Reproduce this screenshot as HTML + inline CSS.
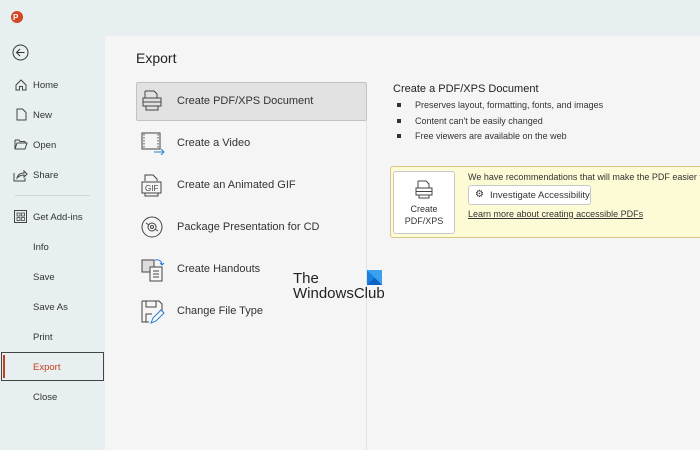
<!DOCTYPE html>
<html><head><style>
body{margin:0;width:700px;height:450px;overflow:hidden;background:#e7eff1;font-family:"Liberation Sans",sans-serif;position:relative}
.abs{position:absolute}
.nav{position:absolute;left:33px;font-size:9.5px;color:#333}
.main{position:absolute;left:105px;top:36px;width:595px;height:414px;background:#f5f5f5}
.item{position:absolute;left:136px;width:230px;height:38px;font-size:11px;color:#333}
.item span{position:absolute;left:41px;top:13px}
.item svg{position:absolute;left:4px;top:7px}
.bul{position:absolute;left:397px;font-size:9px;color:#333}
.bul:before{content:"";position:absolute;left:0;top:3px;width:4px;height:4px;background:#333}
.bul span{margin-left:18px}
</style></head><body>
<div class="abs" style="left:11px;top:11px;width:12px;height:12px;border-radius:50%;background:#d24726"></div>
<div class="abs" style="left:13px;top:13px;font-size:8px;color:#fff;font-weight:bold">P</div>
<svg class="abs" style="left:12px;top:44px" width="17" height="17"><circle cx="8.5" cy="8.5" r="7.5" fill="none" stroke="#333" stroke-width="1"/><path d="M12.5 8.5H4.5M8 5L4.5 8.5 8 12" fill="none" stroke="#333"/></svg>
<svg class="abs" style="left:15px;top:79px" width="12" height="12"><path d="M1 6L6 1 11 6V11H7.5V7.5H4.5V11H1Z" fill="none" stroke="#444"/></svg>
<div class="nav" style="top:80px">Home</div>
<svg class="abs" style="left:16px;top:108px" width="11" height="13"><path d="M1 1H6.5L10 4.5V12H1Z" fill="none" stroke="#444"/></svg>
<div class="nav" style="top:110px">New</div>
<svg class="abs" style="left:14px;top:139px" width="14" height="11"><path d="M1 1H5L6 2.5H11V4M1 1V10H11L13 4H3L1 10" fill="none" stroke="#444"/></svg>
<div class="nav" style="top:140px">Open</div>
<svg class="abs" style="left:13px;top:168px" width="15" height="14"><path d="M1 5V13H12V10M4 10C5 6 8 5 11 5V3L14 6 11 9V7C8 7 6 8 4 10Z" fill="none" stroke="#444"/></svg>
<div class="nav" style="top:170px">Share</div>
<div class="abs" style="left:15px;top:195px;width:75px;height:1px;background:#d0d6d8"></div>
<svg class="abs" style="left:14px;top:210px" width="13" height="13"><rect x=".5" y=".5" width="12" height="12" fill="none" stroke="#444"/><rect x="3" y="3" width="3" height="3" fill="none" stroke="#444" stroke-width=".8"/><rect x="7.5" y="3" width="3" height="3" fill="none" stroke="#444" stroke-width=".8"/><rect x="3" y="7.5" width="3" height="3" fill="none" stroke="#444" stroke-width=".8"/><rect x="7.5" y="7.5" width="3" height="3" fill="none" stroke="#444" stroke-width=".8"/></svg>
<div class="nav" style="top:212px">Get Add-ins</div>
<div class="nav" style="top:242px">Info</div>
<div class="nav" style="top:272px">Save</div>
<div class="nav" style="top:302px">Save As</div>
<div class="nav" style="top:332px">Print</div>
<div class="abs" style="left:1px;top:352px;width:103px;height:29px;border:1px solid #444;box-sizing:border-box"></div>
<div class="abs" style="left:3px;top:355px;width:2px;height:23px;background:#c43e1c"></div>
<div class="nav" style="top:362px;color:#c43e1c">Export</div>
<div class="nav" style="top:392px">Close</div>

<div class="main"></div>
<div class="abs" style="left:136px;top:50px;font-size:14px;color:#222">Export</div>
<div class="abs" style="left:366px;top:82px;width:1px;height:368px;background:#e2e2e2"></div>
<div class="abs" style="left:136px;top:82px;width:231px;height:39px;background:#e1e1e1;border:1px solid #c2c2c2;border-radius:2px;box-sizing:border-box"></div>
<div class="item" style="top:82px"><svg width="24" height="24"><path d="M5 2H14L17 5V9M5 2V9M3 9H21V17H3ZM3 13H21M6 17V21H18V17" fill="none" stroke="#444"/></svg><span>Create PDF/XPS Document</span></div>
<div class="item" style="top:124px"><svg width="26" height="24"><rect x="2" y="2" width="18" height="16" fill="none" stroke="#444"/><path d="M4 3V17M18 3V17" stroke="#444" stroke-dasharray="1.5 1.5"/><path d="M14 21H24M21 18L24 21 21 24" fill="none" stroke="#2b7cd3"/></svg><span>Create a Video</span></div>
<div class="item" style="top:166px"><svg width="24" height="26"><path d="M5 8V2H13L17 6V8M5 20V23H18V20" fill="none" stroke="#444"/><rect x="2" y="9" width="19" height="11" fill="none" stroke="#444"/><text x="5" y="18" font-size="8" fill="#444" font-family="Liberation Sans">GIF</text></svg><span>Create an Animated GIF</span></div>
<div class="item" style="top:208px"><svg width="24" height="24"><circle cx="12" cy="12" r="10" fill="none" stroke="#444"/><circle cx="12" cy="12" r="4" fill="none" stroke="#444"/><circle cx="12" cy="12" r="1.5" fill="none" stroke="#444"/><path d="M6 8L9 10M15 14L18 16" stroke="#444"/></svg><span>Package Presentation for CD</span></div>
<div class="item" style="top:250px"><svg width="26" height="26"><rect x="2" y="3" width="12" height="12" fill="#ddd" stroke="#444"/><rect x="10" y="10" width="12" height="14" fill="#f6f6f6" stroke="#444"/><path d="M13 14H19M13 17H19M13 20H19" stroke="#444"/><path d="M15 3C20 2 22 5 22 8M20 6L22 8 24 6" fill="none" stroke="#2b7cd3"/></svg><span>Create Handouts</span></div>
<div class="item" style="top:292px"><svg width="26" height="26"><path d="M2 2H19L22 5V12M2 2V23H9M6 2V8H16V2M6 23V15H12" fill="none" stroke="#444"/><path d="M11 24L13 19 21 11 24 14 16 22Z" fill="none" stroke="#2b7cd3"/></svg><span>Change File Type</span></div>

<div class="abs" style="left:293px;top:271px;font-size:15px;color:#222;line-height:15px">The<br>WindowsClub</div>
<svg class="abs" style="left:367px;top:270px" width="15" height="15"><rect width="15" height="15" fill="#3aa0f0"/><path d="M0 15L7.5 7.5 15 15Z" fill="#0b63c4"/><path d="M0 0L7.5 7.5 0 15Z" fill="#1a7fdd"/></svg>

<div class="abs" style="left:393px;top:83px;font-size:11px;color:#222">Create a PDF/XPS Document</div>
<div class="bul" style="top:100px"><span>Preserves layout, formatting, fonts, and images</span></div>
<div class="bul" style="top:116px"><span>Content can't be easily changed</span></div>
<div class="bul" style="top:131px"><span>Free viewers are available on the web</span></div>

<div class="abs" style="left:390px;top:166px;width:320px;height:72px;background:#fdfbd6;border:1px solid #d8c883;border-radius:3px;box-sizing:border-box"></div>
<div class="abs" style="left:393px;top:171px;width:62px;height:63px;background:#fff;border:1px solid #c8c8c8;border-radius:3px;box-sizing:border-box;font-size:9px;color:#333;text-align:center;line-height:12px">
<svg style="display:block;margin:7px auto 2px" width="22" height="22"><path d="M5 2H13L16 5V9M5 2V9M3 9H19V16H3ZM3 12.5H19M6 16V19H16V16" fill="none" stroke="#444"/></svg>Create<br>PDF/XPS</div>
<div class="abs" style="left:468px;top:172px;font-size:9px;color:#333;white-space:nowrap">We have recommendations that will make the PDF easier fo</div>
<div class="abs" style="left:468px;top:185px;width:123px;height:20px;background:#fff;border:1px solid #c8c8c8;border-radius:3px;box-sizing:border-box;font-size:9.5px;color:#333"><span style="position:absolute;left:6px;top:3px;font-size:10px">⚙</span><span style="position:absolute;left:21px;top:4px">Investigate Accessibility</span></div>
<div class="abs" style="left:468px;top:209px;font-size:9px;color:#333;text-decoration:underline">Learn more about creating accessible PDFs</div>
</body></html>
